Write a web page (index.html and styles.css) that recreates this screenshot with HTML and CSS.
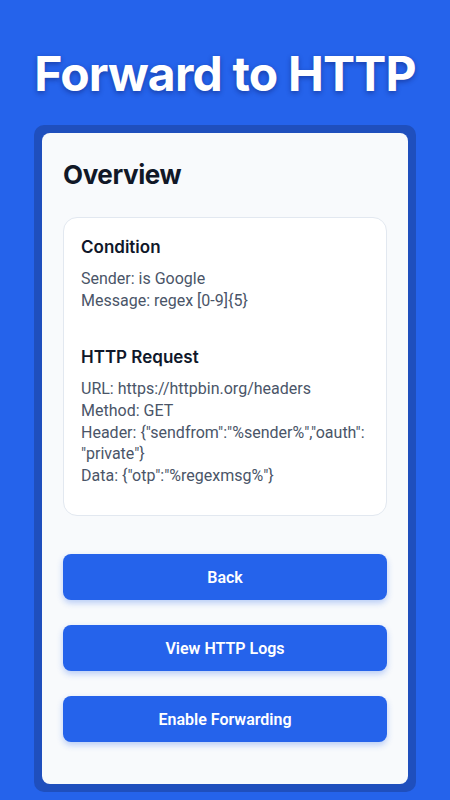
FILE: index.html
```html
<!DOCTYPE html>
<html lang="en">
<head>
  <meta charset="UTF-8" />
  <meta name="viewport" content="width=device-width, initial-scale=1.0" />
  <title>Forward to HTTP</title>
  <link rel="stylesheet" href="styles.css">
</head>
<body>
  <h1 class="hero">Forward to HTTP</h1>
  <div class="frame">
    <div class="screen">
      <h2 class="screen-title">Overview</h2>
      <div class="summary">
        <h3>Condition</h3>
        <p>Sender: is Google</p>
        <p>Message: regex [0-9]{5}</p>

        <h3 class="gap">HTTP Request</h3>
        <p>URL: https://httpbin.org/headers</p>
        <p>Method: GET</p>
        <p class="nowrap">Header: {"sendfrom":"%sender%","oauth":<br>"private"}</p>
        <p>Data: {"otp":"%regexmsg%"}</p>
      </div>
      <div class="actions">
        <button class="btn">Back</button>
        <button class="btn">View HTTP Logs</button>
        <button class="btn">Enable Forwarding</button>
      </div>
    </div>
  </div>
</body>
</html>
```

FILE: styles.css
```css
body {
  margin: 0;
  background: #2563eb;
  font-family: Roboto, 'Liberation Sans', sans-serif;
  padding-top: 45px;
}
.hero {
  margin: 0 0 22px;
  font-family: Inter, 'Liberation Sans', sans-serif;
  font-size: 48px;
  line-height: 58px;
  font-weight: 700;
  letter-spacing: -0.8px;
  color: #fff;
  text-align: center;
  text-shadow: 0 2px 5px rgba(10, 20, 90, 0.45);
}
.frame {
  margin: 0 34px;
  padding: 8px;
  background: #1f4fbd;
  border-radius: 10px;
}
.screen {
  background: #f8fafc;
  border-radius: 8px;
  padding: 26px 21px 42px;
}
.screen-title {
  margin: 0 0 26px;
  font-family: Inter, 'Liberation Sans', sans-serif;
  font-size: 26px;
  line-height: 32px;
  font-weight: 700;
  letter-spacing: -0.4px;
  color: #111827;
}
.summary {
  background: #fff;
  border: 1px solid #e2e8f0;
  border-radius: 14px;
  padding: 17px 16px 28px 17px;
}
.summary h3 {
  margin: 0 0 9px;
  font-family: Inter, 'Liberation Sans', sans-serif;
  font-size: 17px;
  line-height: 24px;
  font-weight: 600;
  color: #0f172a;
}
.summary h3.gap {
  margin-top: 34px;
}
.summary p {
  margin: 0 0 1px;
  font-size: 16px;
  line-height: 21px;
  color: #4a5568;
}
.summary p.nowrap {
  white-space: nowrap;
}
.actions {
  margin-top: 38px;
  display: flex;
  flex-direction: column;
  gap: 25px;
}
.btn {
  height: 46px;
  border: none;
  border-radius: 8px;
  background: #2563eb;
  color: #fff;
  font-family: Roboto, 'Liberation Sans', sans-serif;
  font-size: 16px;
  font-weight: 600;
  box-shadow: 0 3px 6px rgba(37, 99, 235, 0.3);
  cursor: pointer;
}
```
